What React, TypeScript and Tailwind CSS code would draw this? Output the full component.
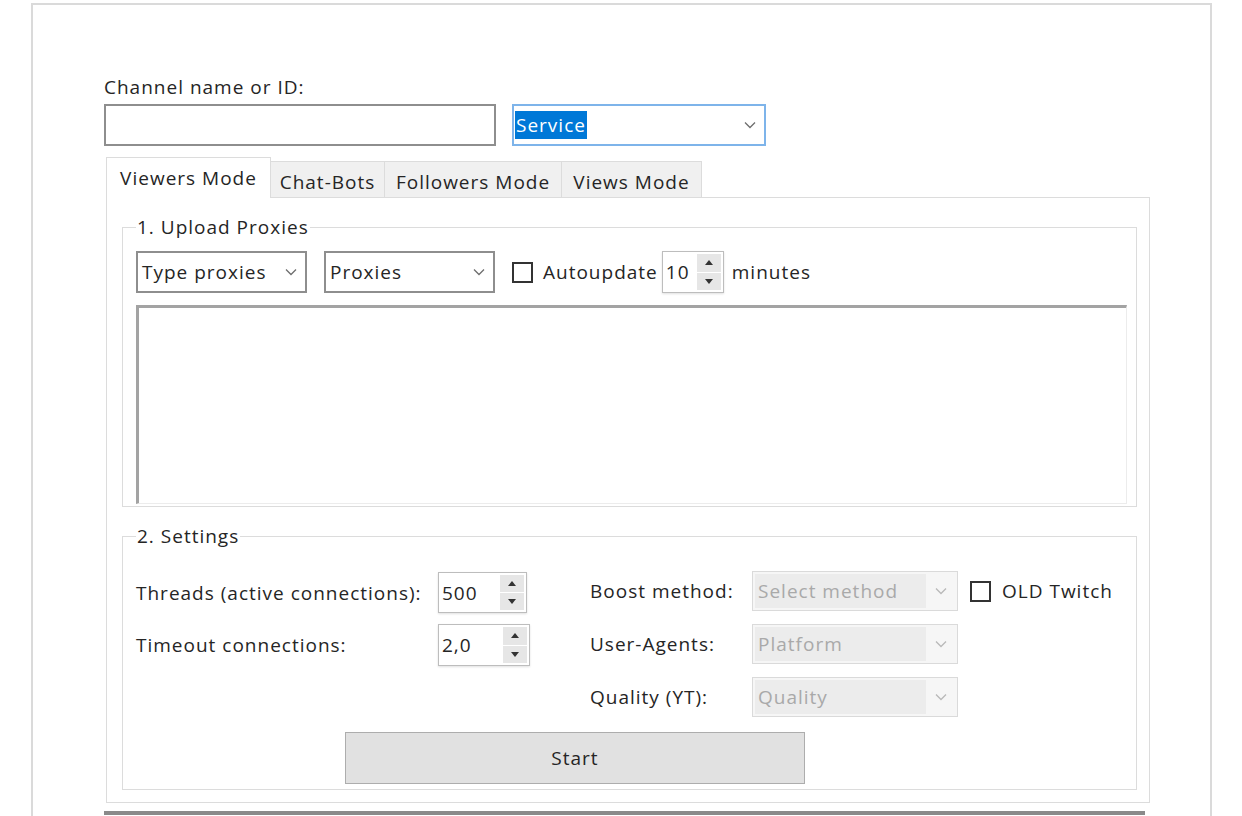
import React from "react";

const Chevron = ({ color = "#6e6e6e" }: { color?: string }) => (
    <svg width="12" height="8" viewBox="0 0 12 8">
        <polyline points="1,1.5 6,6.5 11,1.5" fill="none" stroke={color} strokeWidth="1.3" />
    </svg>
);

const Arrow = ({ up }: { up?: boolean }) => (
    <svg width="8" height="5" viewBox="0 0 8 5">
        <polygon points={up ? "0,5 4,0 8,5" : "0,0 8,0 4,5"} fill="#333" />
    </svg>
);

interface ComboProps {
    text: string;
    width: string;
}

const Combo: React.FC<ComboProps> = ({ text, width }) => (
    <div className={`${width} h-[42px] flex items-center justify-between border-2 border-[#8e8e8e] bg-white pl-[4px] pr-[8px]`}>
        <span>{text}</span>
        <Chevron />
    </div>
);

const DisabledCombo = ({ text }: { text: string }) => (
    <div className="w-[206px] h-[40px] flex items-center border border-[#dadada] bg-[#f6f6f6] p-[2px]">
        <div className="w-[171px] h-full bg-[#ececec] pl-[3px] flex items-center text-[#a9a9a9]">{text}</div>
        <div className="flex-1 flex justify-center">
            <Chevron color="#b9b9b9" />
        </div>
    </div>
);

interface SpinProps {
    value: string;
    width: string;
    height: string;
}

const Spin: React.FC<SpinProps> = ({ value, width, height }) => (
    <div className={`${width} ${height} flex border border-[#bdbdbd] bg-white shadow-[0_1px_2px_rgba(0,0,0,0.12)]`}>
        <div className="flex-1 flex items-center pl-[3px]">{value}</div>
        <div className="w-[24px] my-[2px] mr-[2px] flex flex-col gap-[1px]">
            <div className="flex-1 bg-[#e6e6e6] flex items-center justify-center">
                <Arrow up />
            </div>
            <div className="flex-1 bg-[#e6e6e6] flex items-center justify-center">
                <Arrow />
            </div>
        </div>
    </div>
);

const CheckBox = () => <div className="w-[21px] h-[21px] border-2 border-[#333] bg-white" />;

interface TabProps {
    label: string;
    width: string;
    active?: boolean;
}

const Tab: React.FC<TabProps> = ({ label, width, active }) =>
    active ? (
        <div className={`${width} h-[41px] flex items-center justify-center bg-white border border-b-0 border-[#dcdcdc] -mb-px relative z-10`}>
            {label}
        </div>
    ) : (
        <div className={`${width} h-[36px] flex items-center justify-center pt-[4px] bg-[#f0f0f0] border border-l-0 border-b-0 border-[#dcdcdc]`}>
            {label}
        </div>
    );

export default function App() {
    return (
        <div className="w-[1242px] h-[816px] overflow-hidden bg-white pl-[31px] pt-[3px] font-['Open_Sans',sans-serif] text-[19px] tracking-[1px] leading-[24px] text-[#252525]">
            <div className="w-[1181px] h-[900px] border-2 border-[#dadada] pl-[71px] pt-[70px]">
                <div className="h-[24px]">Channel name or ID:</div>

                <div className="mt-[5px] flex gap-[16px]">
                    <div className="w-[392px] h-[42px] border-2 border-[#8e8e8e] bg-white" />
                    <div className="w-[254px] h-[42px] flex items-center justify-between border-2 border-[#7eb4ea] bg-white pl-[1px] pr-[8px]">
                        <span className="h-[28px] leading-[28px] bg-[#0078d7] text-white px-[1px]">Service</span>
                        <Chevron />
                    </div>
                </div>

                <div className="mt-[11px] ml-[2px] flex items-end">
                    <Tab label="Viewers Mode" width="w-[165px]" active />
                    <Tab label="Chat-Bots" width="w-[114px]" />
                    <Tab label="Followers Mode" width="w-[177px]" />
                    <Tab label="Views Mode" width="w-[140px]" />
                </div>

                <div className="ml-[2px] w-[1044px] border border-[#dcdcdc] pt-[17px] pb-[12px] pl-[15px]">
                    <fieldset className="w-[1015px] border border-[#dcdcdc] pl-[13px] pr-[9px] pb-[2px]">
                        <legend className="px-[1px]">1. Upload Proxies</legend>
                        <div className="mt-[12px] h-[42px] flex items-center">
                            <Combo text="Type proxies" width="w-[171px]" />
                            <div className="ml-[17px]">
                                <Combo text="Proxies" width="w-[171px]" />
                            </div>
                            <div className="ml-[17px]">
                                <CheckBox />
                            </div>
                            <span className="ml-[10px]">Autoupdate</span>
                            <div className="ml-[4px]">
                                <Spin value="10" width="w-[62px]" height="h-[42px]" />
                            </div>
                            <span className="ml-[8px]">minutes</span>
                        </div>
                        <div className="mt-[12px] h-[199px] border-t-[3px] border-l-[3px] border-r border-b border-t-[#a3a3a3] border-l-[#a3a3a3] border-r-[#ececec] border-b-[#ececec] bg-white" />
                    </fieldset>

                    <fieldset className="mt-[17px] w-[1015px] border border-[#dcdcdc] pl-[13px] pb-[5px]">
                        <legend className="px-[1px]">2. Settings</legend>
                        <div className="mt-[23px] flex">
                            <div className="w-[454px] flex flex-col">
                                <div className="mt-[1px] h-[41px] flex items-center">
                                    <span className="w-[302px]">Threads (active connections):</span>
                                    <Spin value="500" width="w-[89px]" height="h-[41px]" />
                                </div>
                                <div className="mt-[11px] h-[42px] flex items-center">
                                    <span className="w-[302px]">Timeout connections:</span>
                                    <Spin value="2,0" width="w-[92px]" height="h-[42px]" />
                                </div>
                            </div>
                            <div className="flex flex-col gap-[13px]">
                                <div className="h-[40px] flex items-center">
                                    <span className="w-[162px]">Boost method:</span>
                                    <DisabledCombo text="Select method" />
                                    <div className="ml-[12px]">
                                        <CheckBox />
                                    </div>
                                    <span className="ml-[11px]">OLD Twitch</span>
                                </div>
                                <div className="h-[40px] flex items-center">
                                    <span className="w-[162px]">User-Agents:</span>
                                    <DisabledCombo text="Platform" />
                                </div>
                                <div className="h-[40px] flex items-center">
                                    <span className="w-[162px]">Quality (YT):</span>
                                    <DisabledCombo text="Quality" />
                                </div>
                            </div>
                        </div>
                        <div className="mt-[15px] ml-[209px] w-[460px] h-[52px] flex items-center justify-center bg-[#e1e1e1] border border-[#adadad]">
                            Start
                        </div>
                    </fieldset>
                </div>

                <div className="mt-[8px] w-[1041px] border-t-4 border-[#8a8a8a]" />
            </div>
        </div>
    );
}
